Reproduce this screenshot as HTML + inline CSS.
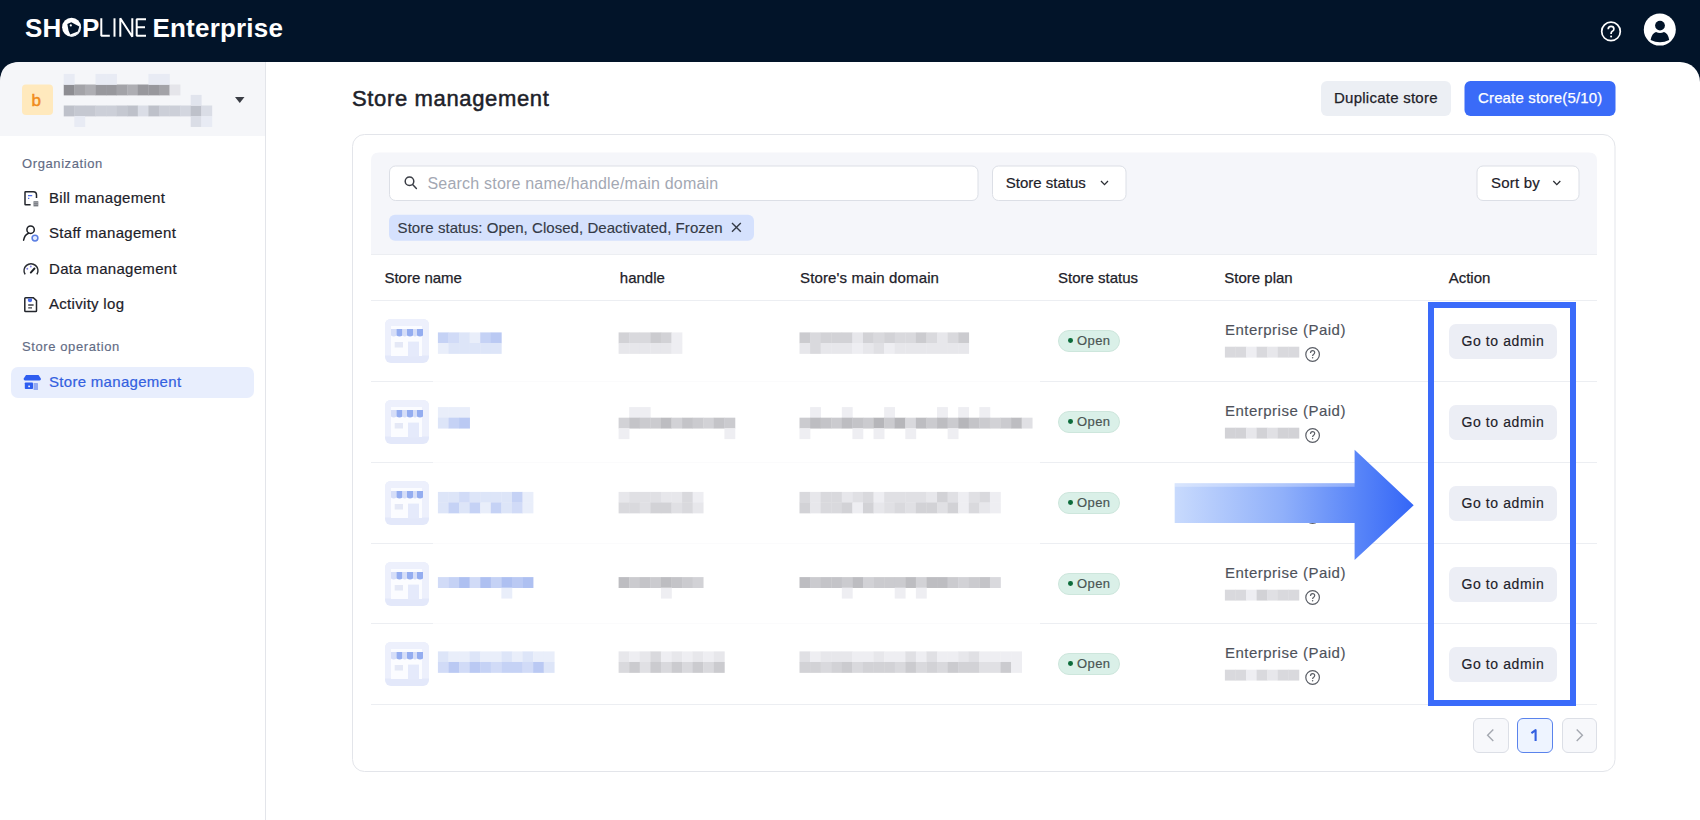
<!DOCTYPE html>
<html><head><meta charset="utf-8">
<style>
*{box-sizing:border-box;margin:0;padding:0}
html,body{width:1700px;height:820px;overflow:hidden;background:#021429;font-family:"Liberation Sans",sans-serif;color:#1d2129}
.a{position:absolute}
.t{position:absolute;white-space:nowrap;line-height:1}
svg{position:absolute;left:0;top:0;overflow:visible}
#page{position:absolute;left:0;top:62px;width:1700px;height:758px;background:#fff;border-radius:20px 20px 0 0;overflow:hidden}
#side{position:absolute;left:0;top:62px;width:266px;height:758px;border-right:1px solid #e3e5ea}
.nav{position:absolute;left:49px;font-size:15px;letter-spacing:.3px;-webkit-text-stroke:.2px currentColor;white-space:nowrap;line-height:1;color:#1d2129}
.lab{position:absolute;left:22px;font-size:13px;letter-spacing:.6px;white-space:nowrap;line-height:1;color:#626b84;-webkit-text-stroke:.15px currentColor}
.hd{position:absolute;top:269.5px;font-size:15px;-webkit-text-stroke:.25px currentColor;white-space:nowrap;line-height:1;color:#1d2129}
.badge{position:absolute;left:1057.6px;width:62.8px;height:22px;border-radius:11px;background:#daf0e8;border:1px solid #cde6dc;font-size:13px;letter-spacing:.4px;color:#4a5654;-webkit-text-stroke:.2px currentColor;line-height:20px;padding-left:18.5px}
.badge i{position:absolute;left:9.2px;top:7.7px;width:4.8px;height:4.8px;border-radius:50%;background:#0b6b3a}
.plan{left:1224.9px;font-size:15px;letter-spacing:.5px;color:#4e525b;-webkit-text-stroke:.15px currentColor}
.goto{position:absolute;left:1448.8px;width:108.2px;height:35px;border-radius:7px;background:#eceef5;font-size:14px;letter-spacing:.6px;color:#1d2129;line-height:35px;-webkit-text-stroke:.15px currentColor;text-align:center;white-space:nowrap}
.pg{position:absolute;top:718px;width:35.5px;height:35px;border:1.2px solid #dcdfe6;border-radius:6px;background:#f7f8fb}
</style></head>
<body>
<div id="page"></div>
<div id="side"></div>
<svg width="1700" height="820">
<!-- sidebar switcher -->
<path d="M20 62 H265 V136 H0 V82 Q0 62 20 62Z" fill="#f5f6f9"/>
<rect x="22" y="84.5" width="31" height="30.5" rx="4" fill="#ffe9bd"/>
<path d="M235 97 h9.5 l-4.75 6z" fill="#3a3d45"/>
<!-- active nav -->
<rect x="11" y="367" width="243" height="31" rx="7" fill="#e8eefd"/>
<!-- title buttons -->
<rect x="1321" y="81" width="130" height="35" rx="6" fill="#eceff4"/>
<rect x="1464.5" y="81" width="151" height="35" rx="6" fill="#3a6bf8"/>
<!-- card -->
<rect x="352.5" y="134.5" width="1262.5" height="637" rx="12" fill="#fff" stroke="#e3e5ea" stroke-width="1"/>
<path d="M379 152.5 H1589 Q1597 152.5 1597 160.5 V254.5 H371 V160.5 Q371 152.5 379 152.5Z" fill="#f5f6fa"/>
<rect x="371" y="254" width="1226" height="1" fill="#eceef2"/>
<rect x="389.5" y="166" width="588.5" height="34.5" rx="6" fill="#fff" stroke="#dcdfe6"/>
<rect x="992.5" y="166" width="133.5" height="34.5" rx="6" fill="#fff" stroke="#dcdfe6"/>
<rect x="1477" y="166" width="102" height="34.5" rx="6" fill="#fff" stroke="#dcdfe6"/>
<rect x="389" y="214.7" width="365" height="26" rx="6" fill="#d5e1fd"/>
<!-- table lines -->
<rect x="371" y="704" width="1226" height="1" fill="#eceef2"/><rect x="371" y="300" width="1226" height="1" fill="#eceef2"/><rect x="371" y="381" width="62" height="1" fill="#eceef2"/><rect x="433" y="381" width="607" height="1" fill="#fbfbfc"/><rect x="1040" y="381" width="557" height="1" fill="#eceef2"/><rect x="371" y="462" width="62" height="1" fill="#eceef2"/><rect x="433" y="462" width="607" height="1" fill="#fbfbfc"/><rect x="1040" y="462" width="557" height="1" fill="#eceef2"/><rect x="371" y="543" width="62" height="1" fill="#eceef2"/><rect x="433" y="543" width="607" height="1" fill="#fbfbfc"/><rect x="1040" y="543" width="557" height="1" fill="#eceef2"/><rect x="371" y="623" width="62" height="1" fill="#eceef2"/><rect x="433" y="623" width="607" height="1" fill="#fbfbfc"/><rect x="1040" y="623" width="557" height="1" fill="#eceef2"/>
<rect x="437.90" y="332.40" width="10.88" height="10.88" fill="rgb(197,210,245)"/><rect x="448.48" y="332.40" width="10.88" height="10.88" fill="rgb(209,219,247)"/><rect x="459.06" y="332.40" width="10.88" height="10.88" fill="rgb(221,229,248)"/><rect x="469.64" y="332.40" width="10.88" height="10.88" fill="rgb(233,238,250)"/><rect x="480.22" y="332.40" width="10.88" height="10.88" fill="rgb(197,210,245)"/><rect x="490.80" y="332.40" width="10.88" height="10.88" fill="rgb(186,201,243)"/><rect x="437.90" y="342.98" width="10.88" height="10.88" fill="rgb(233,238,250)"/><rect x="448.48" y="342.98" width="10.88" height="10.88" fill="rgb(221,229,248)"/><rect x="459.06" y="342.98" width="10.88" height="10.88" fill="rgb(221,229,248)"/><rect x="469.64" y="342.98" width="10.88" height="10.88" fill="rgb(221,229,248)"/><rect x="480.22" y="342.98" width="10.88" height="10.88" fill="rgb(221,229,248)"/><rect x="490.80" y="342.98" width="10.88" height="10.88" fill="rgb(221,229,248)"/><rect x="618.60" y="332.40" width="10.88" height="10.88" fill="rgb(210,210,214)"/><rect x="629.18" y="332.40" width="10.88" height="10.88" fill="rgb(217,217,221)"/><rect x="639.76" y="332.40" width="10.88" height="10.88" fill="rgb(217,217,221)"/><rect x="650.34" y="332.40" width="10.88" height="10.88" fill="rgb(203,203,207)"/><rect x="660.92" y="332.40" width="10.88" height="10.88" fill="rgb(210,210,214)"/><rect x="671.50" y="332.40" width="10.88" height="10.88" fill="rgb(238,238,242)"/><rect x="618.60" y="342.98" width="10.88" height="10.88" fill="rgb(231,231,235)"/><rect x="629.18" y="342.98" width="10.88" height="10.88" fill="rgb(231,231,235)"/><rect x="639.76" y="342.98" width="10.88" height="10.88" fill="rgb(231,231,235)"/><rect x="650.34" y="342.98" width="10.88" height="10.88" fill="rgb(231,231,235)"/><rect x="660.92" y="342.98" width="10.88" height="10.88" fill="rgb(231,231,235)"/><rect x="671.50" y="342.98" width="10.88" height="10.88" fill="rgb(238,238,242)"/><rect x="799.50" y="332.40" width="10.88" height="10.88" fill="rgb(203,203,207)"/><rect x="810.08" y="332.40" width="10.88" height="10.88" fill="rgb(217,217,221)"/><rect x="820.66" y="332.40" width="10.88" height="10.88" fill="rgb(210,210,214)"/><rect x="831.24" y="332.40" width="10.88" height="10.88" fill="rgb(210,210,214)"/><rect x="841.82" y="332.40" width="10.88" height="10.88" fill="rgb(210,210,214)"/><rect x="852.40" y="332.40" width="10.88" height="10.88" fill="rgb(231,231,235)"/><rect x="862.98" y="332.40" width="10.88" height="10.88" fill="rgb(210,210,214)"/><rect x="873.56" y="332.40" width="10.88" height="10.88" fill="rgb(217,217,221)"/><rect x="884.14" y="332.40" width="10.88" height="10.88" fill="rgb(210,210,214)"/><rect x="894.72" y="332.40" width="10.88" height="10.88" fill="rgb(217,217,221)"/><rect x="905.30" y="332.40" width="10.88" height="10.88" fill="rgb(217,217,221)"/><rect x="915.88" y="332.40" width="10.88" height="10.88" fill="rgb(203,203,207)"/><rect x="926.46" y="332.40" width="10.88" height="10.88" fill="rgb(217,217,221)"/><rect x="937.04" y="332.40" width="10.88" height="10.88" fill="rgb(231,231,235)"/><rect x="947.62" y="332.40" width="10.88" height="10.88" fill="rgb(217,217,221)"/><rect x="958.20" y="332.40" width="10.88" height="10.88" fill="rgb(203,203,207)"/><rect x="799.50" y="342.98" width="10.88" height="10.88" fill="rgb(231,231,235)"/><rect x="810.08" y="342.98" width="10.88" height="10.88" fill="rgb(217,217,221)"/><rect x="820.66" y="342.98" width="10.88" height="10.88" fill="rgb(231,231,235)"/><rect x="831.24" y="342.98" width="10.88" height="10.88" fill="rgb(231,231,235)"/><rect x="841.82" y="342.98" width="10.88" height="10.88" fill="rgb(231,231,235)"/><rect x="852.40" y="342.98" width="10.88" height="10.88" fill="rgb(238,238,242)"/><rect x="862.98" y="342.98" width="10.88" height="10.88" fill="rgb(231,231,235)"/><rect x="873.56" y="342.98" width="10.88" height="10.88" fill="rgb(224,224,228)"/><rect x="884.14" y="342.98" width="10.88" height="10.88" fill="rgb(238,238,242)"/><rect x="894.72" y="342.98" width="10.88" height="10.88" fill="rgb(231,231,235)"/><rect x="905.30" y="342.98" width="10.88" height="10.88" fill="rgb(231,231,235)"/><rect x="915.88" y="342.98" width="10.88" height="10.88" fill="rgb(231,231,235)"/><rect x="926.46" y="342.98" width="10.88" height="10.88" fill="rgb(231,231,235)"/><rect x="937.04" y="342.98" width="10.88" height="10.88" fill="rgb(231,231,235)"/><rect x="947.62" y="342.98" width="10.88" height="10.88" fill="rgb(231,231,235)"/><rect x="958.20" y="342.98" width="10.88" height="10.88" fill="rgb(231,231,235)"/><rect x="437.90" y="407.10" width="10.88" height="10.88" fill="rgb(233,238,250)"/><rect x="448.48" y="407.10" width="10.88" height="10.88" fill="rgb(233,238,250)"/><rect x="459.06" y="407.10" width="10.88" height="10.88" fill="rgb(233,238,250)"/><rect x="437.90" y="417.68" width="10.88" height="10.88" fill="rgb(221,229,248)"/><rect x="448.48" y="417.68" width="10.88" height="10.88" fill="rgb(197,210,245)"/><rect x="459.06" y="417.68" width="10.88" height="10.88" fill="rgb(186,201,243)"/><rect x="629.18" y="407.10" width="10.88" height="10.88" fill="rgb(238,238,242)"/><rect x="639.76" y="407.10" width="10.88" height="10.88" fill="rgb(238,238,242)"/><rect x="618.60" y="417.68" width="10.88" height="10.88" fill="rgb(210,210,214)"/><rect x="629.18" y="417.68" width="10.88" height="10.88" fill="rgb(196,196,200)"/><rect x="639.76" y="417.68" width="10.88" height="10.88" fill="rgb(203,203,207)"/><rect x="650.34" y="417.68" width="10.88" height="10.88" fill="rgb(203,203,207)"/><rect x="660.92" y="417.68" width="10.88" height="10.88" fill="rgb(189,189,193)"/><rect x="671.50" y="417.68" width="10.88" height="10.88" fill="rgb(210,210,214)"/><rect x="682.08" y="417.68" width="10.88" height="10.88" fill="rgb(196,196,200)"/><rect x="692.66" y="417.68" width="10.88" height="10.88" fill="rgb(203,203,207)"/><rect x="703.24" y="417.68" width="10.88" height="10.88" fill="rgb(210,210,214)"/><rect x="713.82" y="417.68" width="10.88" height="10.88" fill="rgb(196,196,200)"/><rect x="724.40" y="417.68" width="10.88" height="10.88" fill="rgb(203,203,207)"/><rect x="618.60" y="428.26" width="10.88" height="10.88" fill="rgb(238,238,242)"/><rect x="724.40" y="428.26" width="10.88" height="10.88" fill="rgb(238,238,242)"/><rect x="810.08" y="407.10" width="10.88" height="10.88" fill="rgb(238,238,242)"/><rect x="841.82" y="407.10" width="10.88" height="10.88" fill="rgb(238,238,242)"/><rect x="884.14" y="407.10" width="10.88" height="10.88" fill="rgb(238,238,242)"/><rect x="937.04" y="407.10" width="10.88" height="10.88" fill="rgb(238,238,242)"/><rect x="958.20" y="407.10" width="10.88" height="10.88" fill="rgb(238,238,242)"/><rect x="979.36" y="407.10" width="10.88" height="10.88" fill="rgb(238,238,242)"/><rect x="799.50" y="417.68" width="10.88" height="10.88" fill="rgb(203,203,207)"/><rect x="810.08" y="417.68" width="10.88" height="10.88" fill="rgb(189,189,193)"/><rect x="820.66" y="417.68" width="10.88" height="10.88" fill="rgb(196,196,200)"/><rect x="831.24" y="417.68" width="10.88" height="10.88" fill="rgb(203,203,207)"/><rect x="841.82" y="417.68" width="10.88" height="10.88" fill="rgb(189,189,193)"/><rect x="852.40" y="417.68" width="10.88" height="10.88" fill="rgb(196,196,200)"/><rect x="862.98" y="417.68" width="10.88" height="10.88" fill="rgb(203,203,207)"/><rect x="873.56" y="417.68" width="10.88" height="10.88" fill="rgb(182,182,186)"/><rect x="884.14" y="417.68" width="10.88" height="10.88" fill="rgb(203,203,207)"/><rect x="894.72" y="417.68" width="10.88" height="10.88" fill="rgb(182,182,186)"/><rect x="905.30" y="417.68" width="10.88" height="10.88" fill="rgb(217,217,221)"/><rect x="915.88" y="417.68" width="10.88" height="10.88" fill="rgb(189,189,193)"/><rect x="926.46" y="417.68" width="10.88" height="10.88" fill="rgb(203,203,207)"/><rect x="937.04" y="417.68" width="10.88" height="10.88" fill="rgb(189,189,193)"/><rect x="947.62" y="417.68" width="10.88" height="10.88" fill="rgb(203,203,207)"/><rect x="958.20" y="417.68" width="10.88" height="10.88" fill="rgb(182,182,186)"/><rect x="968.78" y="417.68" width="10.88" height="10.88" fill="rgb(196,196,200)"/><rect x="979.36" y="417.68" width="10.88" height="10.88" fill="rgb(203,203,207)"/><rect x="989.94" y="417.68" width="10.88" height="10.88" fill="rgb(210,210,214)"/><rect x="1000.52" y="417.68" width="10.88" height="10.88" fill="rgb(203,203,207)"/><rect x="1011.10" y="417.68" width="10.88" height="10.88" fill="rgb(189,189,193)"/><rect x="1021.68" y="417.68" width="10.88" height="10.88" fill="rgb(224,224,228)"/><rect x="799.50" y="428.26" width="10.88" height="10.88" fill="rgb(238,238,242)"/><rect x="852.40" y="428.26" width="10.88" height="10.88" fill="rgb(238,238,242)"/><rect x="873.56" y="428.26" width="10.88" height="10.88" fill="rgb(238,238,242)"/><rect x="905.30" y="428.26" width="10.88" height="10.88" fill="rgb(238,238,242)"/><rect x="947.62" y="428.26" width="10.88" height="10.88" fill="rgb(238,238,242)"/><rect x="437.90" y="491.90" width="10.88" height="10.88" fill="rgb(221,229,248)"/><rect x="448.48" y="491.90" width="10.88" height="10.88" fill="rgb(221,229,248)"/><rect x="459.06" y="491.90" width="10.88" height="10.88" fill="rgb(209,219,247)"/><rect x="469.64" y="491.90" width="10.88" height="10.88" fill="rgb(221,229,248)"/><rect x="480.22" y="491.90" width="10.88" height="10.88" fill="rgb(221,229,248)"/><rect x="490.80" y="491.90" width="10.88" height="10.88" fill="rgb(221,229,248)"/><rect x="501.38" y="491.90" width="10.88" height="10.88" fill="rgb(221,229,248)"/><rect x="511.96" y="491.90" width="10.88" height="10.88" fill="rgb(197,210,245)"/><rect x="522.54" y="491.90" width="10.88" height="10.88" fill="rgb(233,238,250)"/><rect x="437.90" y="502.48" width="10.88" height="10.88" fill="rgb(221,229,248)"/><rect x="448.48" y="502.48" width="10.88" height="10.88" fill="rgb(197,210,245)"/><rect x="459.06" y="502.48" width="10.88" height="10.88" fill="rgb(221,229,248)"/><rect x="469.64" y="502.48" width="10.88" height="10.88" fill="rgb(197,210,245)"/><rect x="480.22" y="502.48" width="10.88" height="10.88" fill="rgb(233,238,250)"/><rect x="490.80" y="502.48" width="10.88" height="10.88" fill="rgb(197,210,245)"/><rect x="501.38" y="502.48" width="10.88" height="10.88" fill="rgb(221,229,248)"/><rect x="511.96" y="502.48" width="10.88" height="10.88" fill="rgb(209,219,247)"/><rect x="522.54" y="502.48" width="10.88" height="10.88" fill="rgb(233,238,250)"/><rect x="618.60" y="491.90" width="10.88" height="10.88" fill="rgb(231,231,235)"/><rect x="629.18" y="491.90" width="10.88" height="10.88" fill="rgb(224,224,228)"/><rect x="639.76" y="491.90" width="10.88" height="10.88" fill="rgb(224,224,228)"/><rect x="650.34" y="491.90" width="10.88" height="10.88" fill="rgb(224,224,228)"/><rect x="660.92" y="491.90" width="10.88" height="10.88" fill="rgb(231,231,235)"/><rect x="671.50" y="491.90" width="10.88" height="10.88" fill="rgb(231,231,235)"/><rect x="682.08" y="491.90" width="10.88" height="10.88" fill="rgb(217,217,221)"/><rect x="692.66" y="491.90" width="10.88" height="10.88" fill="rgb(238,238,242)"/><rect x="618.60" y="502.48" width="10.88" height="10.88" fill="rgb(217,217,221)"/><rect x="629.18" y="502.48" width="10.88" height="10.88" fill="rgb(217,217,221)"/><rect x="639.76" y="502.48" width="10.88" height="10.88" fill="rgb(224,224,228)"/><rect x="650.34" y="502.48" width="10.88" height="10.88" fill="rgb(210,210,214)"/><rect x="660.92" y="502.48" width="10.88" height="10.88" fill="rgb(210,210,214)"/><rect x="671.50" y="502.48" width="10.88" height="10.88" fill="rgb(224,224,228)"/><rect x="682.08" y="502.48" width="10.88" height="10.88" fill="rgb(217,217,221)"/><rect x="692.66" y="502.48" width="10.88" height="10.88" fill="rgb(231,231,235)"/><rect x="799.50" y="491.90" width="10.88" height="10.88" fill="rgb(217,217,221)"/><rect x="810.08" y="491.90" width="10.88" height="10.88" fill="rgb(231,231,235)"/><rect x="820.66" y="491.90" width="10.88" height="10.88" fill="rgb(217,217,221)"/><rect x="831.24" y="491.90" width="10.88" height="10.88" fill="rgb(217,217,221)"/><rect x="841.82" y="491.90" width="10.88" height="10.88" fill="rgb(231,231,235)"/><rect x="852.40" y="491.90" width="10.88" height="10.88" fill="rgb(224,224,228)"/><rect x="862.98" y="491.90" width="10.88" height="10.88" fill="rgb(217,217,221)"/><rect x="873.56" y="491.90" width="10.88" height="10.88" fill="rgb(238,238,242)"/><rect x="884.14" y="491.90" width="10.88" height="10.88" fill="rgb(224,224,228)"/><rect x="894.72" y="491.90" width="10.88" height="10.88" fill="rgb(224,224,228)"/><rect x="905.30" y="491.90" width="10.88" height="10.88" fill="rgb(224,224,228)"/><rect x="915.88" y="491.90" width="10.88" height="10.88" fill="rgb(224,224,228)"/><rect x="926.46" y="491.90" width="10.88" height="10.88" fill="rgb(231,231,235)"/><rect x="937.04" y="491.90" width="10.88" height="10.88" fill="rgb(210,210,214)"/><rect x="947.62" y="491.90" width="10.88" height="10.88" fill="rgb(224,224,228)"/><rect x="958.20" y="491.90" width="10.88" height="10.88" fill="rgb(238,238,242)"/><rect x="968.78" y="491.90" width="10.88" height="10.88" fill="rgb(224,224,228)"/><rect x="979.36" y="491.90" width="10.88" height="10.88" fill="rgb(217,217,221)"/><rect x="989.94" y="491.90" width="10.88" height="10.88" fill="rgb(238,238,242)"/><rect x="799.50" y="502.48" width="10.88" height="10.88" fill="rgb(210,210,214)"/><rect x="810.08" y="502.48" width="10.88" height="10.88" fill="rgb(231,231,235)"/><rect x="820.66" y="502.48" width="10.88" height="10.88" fill="rgb(217,217,221)"/><rect x="831.24" y="502.48" width="10.88" height="10.88" fill="rgb(217,217,221)"/><rect x="841.82" y="502.48" width="10.88" height="10.88" fill="rgb(210,210,214)"/><rect x="852.40" y="502.48" width="10.88" height="10.88" fill="rgb(238,238,242)"/><rect x="862.98" y="502.48" width="10.88" height="10.88" fill="rgb(210,210,214)"/><rect x="873.56" y="502.48" width="10.88" height="10.88" fill="rgb(231,231,235)"/><rect x="884.14" y="502.48" width="10.88" height="10.88" fill="rgb(224,224,228)"/><rect x="894.72" y="502.48" width="10.88" height="10.88" fill="rgb(217,217,221)"/><rect x="905.30" y="502.48" width="10.88" height="10.88" fill="rgb(224,224,228)"/><rect x="915.88" y="502.48" width="10.88" height="10.88" fill="rgb(210,210,214)"/><rect x="926.46" y="502.48" width="10.88" height="10.88" fill="rgb(210,210,214)"/><rect x="937.04" y="502.48" width="10.88" height="10.88" fill="rgb(224,224,228)"/><rect x="947.62" y="502.48" width="10.88" height="10.88" fill="rgb(210,210,214)"/><rect x="958.20" y="502.48" width="10.88" height="10.88" fill="rgb(238,238,242)"/><rect x="968.78" y="502.48" width="10.88" height="10.88" fill="rgb(217,217,221)"/><rect x="979.36" y="502.48" width="10.88" height="10.88" fill="rgb(231,231,235)"/><rect x="989.94" y="502.48" width="10.88" height="10.88" fill="rgb(238,238,242)"/><rect x="437.90" y="577.10" width="10.88" height="10.88" fill="rgb(209,219,247)"/><rect x="448.48" y="577.10" width="10.88" height="10.88" fill="rgb(197,210,245)"/><rect x="459.06" y="577.10" width="10.88" height="10.88" fill="rgb(174,192,241)"/><rect x="469.64" y="577.10" width="10.88" height="10.88" fill="rgb(209,219,247)"/><rect x="480.22" y="577.10" width="10.88" height="10.88" fill="rgb(174,192,241)"/><rect x="490.80" y="577.10" width="10.88" height="10.88" fill="rgb(197,210,245)"/><rect x="501.38" y="577.10" width="10.88" height="10.88" fill="rgb(174,192,241)"/><rect x="511.96" y="577.10" width="10.88" height="10.88" fill="rgb(186,201,243)"/><rect x="522.54" y="577.10" width="10.88" height="10.88" fill="rgb(174,192,241)"/><rect x="501.38" y="587.68" width="10.88" height="10.88" fill="rgb(233,238,250)"/><rect x="618.60" y="577.10" width="10.88" height="10.88" fill="rgb(189,189,193)"/><rect x="629.18" y="577.10" width="10.88" height="10.88" fill="rgb(203,203,207)"/><rect x="639.76" y="577.10" width="10.88" height="10.88" fill="rgb(196,196,200)"/><rect x="650.34" y="577.10" width="10.88" height="10.88" fill="rgb(203,203,207)"/><rect x="660.92" y="577.10" width="10.88" height="10.88" fill="rgb(189,189,193)"/><rect x="671.50" y="577.10" width="10.88" height="10.88" fill="rgb(196,196,200)"/><rect x="682.08" y="577.10" width="10.88" height="10.88" fill="rgb(203,203,207)"/><rect x="692.66" y="577.10" width="10.88" height="10.88" fill="rgb(210,210,214)"/><rect x="660.92" y="587.68" width="10.88" height="10.88" fill="rgb(238,238,242)"/><rect x="799.50" y="577.10" width="10.88" height="10.88" fill="rgb(189,189,193)"/><rect x="810.08" y="577.10" width="10.88" height="10.88" fill="rgb(203,203,207)"/><rect x="820.66" y="577.10" width="10.88" height="10.88" fill="rgb(196,196,200)"/><rect x="831.24" y="577.10" width="10.88" height="10.88" fill="rgb(196,196,200)"/><rect x="841.82" y="577.10" width="10.88" height="10.88" fill="rgb(203,203,207)"/><rect x="852.40" y="577.10" width="10.88" height="10.88" fill="rgb(189,189,193)"/><rect x="862.98" y="577.10" width="10.88" height="10.88" fill="rgb(210,210,214)"/><rect x="873.56" y="577.10" width="10.88" height="10.88" fill="rgb(203,203,207)"/><rect x="884.14" y="577.10" width="10.88" height="10.88" fill="rgb(203,203,207)"/><rect x="894.72" y="577.10" width="10.88" height="10.88" fill="rgb(203,203,207)"/><rect x="905.30" y="577.10" width="10.88" height="10.88" fill="rgb(189,189,193)"/><rect x="915.88" y="577.10" width="10.88" height="10.88" fill="rgb(210,210,214)"/><rect x="926.46" y="577.10" width="10.88" height="10.88" fill="rgb(189,189,193)"/><rect x="937.04" y="577.10" width="10.88" height="10.88" fill="rgb(189,189,193)"/><rect x="947.62" y="577.10" width="10.88" height="10.88" fill="rgb(203,203,207)"/><rect x="958.20" y="577.10" width="10.88" height="10.88" fill="rgb(210,210,214)"/><rect x="968.78" y="577.10" width="10.88" height="10.88" fill="rgb(203,203,207)"/><rect x="979.36" y="577.10" width="10.88" height="10.88" fill="rgb(196,196,200)"/><rect x="989.94" y="577.10" width="10.88" height="10.88" fill="rgb(217,217,221)"/><rect x="841.82" y="587.68" width="10.88" height="10.88" fill="rgb(238,238,242)"/><rect x="894.72" y="587.68" width="10.88" height="10.88" fill="rgb(238,238,242)"/><rect x="915.88" y="587.68" width="10.88" height="10.88" fill="rgb(238,238,242)"/><rect x="437.90" y="651.40" width="10.88" height="10.88" fill="rgb(221,229,248)"/><rect x="448.48" y="651.40" width="10.88" height="10.88" fill="rgb(233,238,250)"/><rect x="459.06" y="651.40" width="10.88" height="10.88" fill="rgb(233,238,250)"/><rect x="469.64" y="651.40" width="10.88" height="10.88" fill="rgb(221,229,248)"/><rect x="480.22" y="651.40" width="10.88" height="10.88" fill="rgb(233,238,250)"/><rect x="490.80" y="651.40" width="10.88" height="10.88" fill="rgb(233,238,250)"/><rect x="501.38" y="651.40" width="10.88" height="10.88" fill="rgb(221,229,248)"/><rect x="511.96" y="651.40" width="10.88" height="10.88" fill="rgb(233,238,250)"/><rect x="522.54" y="651.40" width="10.88" height="10.88" fill="rgb(221,229,248)"/><rect x="533.12" y="651.40" width="10.88" height="10.88" fill="rgb(233,238,250)"/><rect x="543.70" y="651.40" width="10.88" height="10.88" fill="rgb(233,238,250)"/><rect x="437.90" y="661.98" width="10.88" height="10.88" fill="rgb(209,219,247)"/><rect x="448.48" y="661.98" width="10.88" height="10.88" fill="rgb(186,201,243)"/><rect x="459.06" y="661.98" width="10.88" height="10.88" fill="rgb(209,219,247)"/><rect x="469.64" y="661.98" width="10.88" height="10.88" fill="rgb(186,201,243)"/><rect x="480.22" y="661.98" width="10.88" height="10.88" fill="rgb(197,210,245)"/><rect x="490.80" y="661.98" width="10.88" height="10.88" fill="rgb(209,219,247)"/><rect x="501.38" y="661.98" width="10.88" height="10.88" fill="rgb(197,210,245)"/><rect x="511.96" y="661.98" width="10.88" height="10.88" fill="rgb(197,210,245)"/><rect x="522.54" y="661.98" width="10.88" height="10.88" fill="rgb(209,219,247)"/><rect x="533.12" y="661.98" width="10.88" height="10.88" fill="rgb(186,201,243)"/><rect x="543.70" y="661.98" width="10.88" height="10.88" fill="rgb(221,229,248)"/><rect x="618.60" y="651.40" width="10.88" height="10.88" fill="rgb(231,231,235)"/><rect x="629.18" y="651.40" width="10.88" height="10.88" fill="rgb(238,238,242)"/><rect x="639.76" y="651.40" width="10.88" height="10.88" fill="rgb(231,231,235)"/><rect x="650.34" y="651.40" width="10.88" height="10.88" fill="rgb(217,217,221)"/><rect x="660.92" y="651.40" width="10.88" height="10.88" fill="rgb(238,238,242)"/><rect x="671.50" y="651.40" width="10.88" height="10.88" fill="rgb(231,231,235)"/><rect x="682.08" y="651.40" width="10.88" height="10.88" fill="rgb(238,238,242)"/><rect x="692.66" y="651.40" width="10.88" height="10.88" fill="rgb(231,231,235)"/><rect x="703.24" y="651.40" width="10.88" height="10.88" fill="rgb(238,238,242)"/><rect x="713.82" y="651.40" width="10.88" height="10.88" fill="rgb(231,231,235)"/><rect x="618.60" y="661.98" width="10.88" height="10.88" fill="rgb(217,217,221)"/><rect x="629.18" y="661.98" width="10.88" height="10.88" fill="rgb(203,203,207)"/><rect x="639.76" y="661.98" width="10.88" height="10.88" fill="rgb(224,224,228)"/><rect x="650.34" y="661.98" width="10.88" height="10.88" fill="rgb(203,203,207)"/><rect x="660.92" y="661.98" width="10.88" height="10.88" fill="rgb(217,217,221)"/><rect x="671.50" y="661.98" width="10.88" height="10.88" fill="rgb(203,203,207)"/><rect x="682.08" y="661.98" width="10.88" height="10.88" fill="rgb(217,217,221)"/><rect x="692.66" y="661.98" width="10.88" height="10.88" fill="rgb(203,203,207)"/><rect x="703.24" y="661.98" width="10.88" height="10.88" fill="rgb(217,217,221)"/><rect x="713.82" y="661.98" width="10.88" height="10.88" fill="rgb(203,203,207)"/><rect x="799.50" y="651.40" width="10.88" height="10.88" fill="rgb(224,224,228)"/><rect x="810.08" y="651.40" width="10.88" height="10.88" fill="rgb(238,238,242)"/><rect x="820.66" y="651.40" width="10.88" height="10.88" fill="rgb(231,231,235)"/><rect x="831.24" y="651.40" width="10.88" height="10.88" fill="rgb(231,231,235)"/><rect x="841.82" y="651.40" width="10.88" height="10.88" fill="rgb(231,231,235)"/><rect x="852.40" y="651.40" width="10.88" height="10.88" fill="rgb(238,238,242)"/><rect x="862.98" y="651.40" width="10.88" height="10.88" fill="rgb(238,238,242)"/><rect x="873.56" y="651.40" width="10.88" height="10.88" fill="rgb(231,231,235)"/><rect x="884.14" y="651.40" width="10.88" height="10.88" fill="rgb(238,238,242)"/><rect x="894.72" y="651.40" width="10.88" height="10.88" fill="rgb(238,238,242)"/><rect x="905.30" y="651.40" width="10.88" height="10.88" fill="rgb(224,224,228)"/><rect x="915.88" y="651.40" width="10.88" height="10.88" fill="rgb(238,238,242)"/><rect x="926.46" y="651.40" width="10.88" height="10.88" fill="rgb(224,224,228)"/><rect x="937.04" y="651.40" width="10.88" height="10.88" fill="rgb(238,238,242)"/><rect x="947.62" y="651.40" width="10.88" height="10.88" fill="rgb(238,238,242)"/><rect x="958.20" y="651.40" width="10.88" height="10.88" fill="rgb(231,231,235)"/><rect x="968.78" y="651.40" width="10.88" height="10.88" fill="rgb(224,224,228)"/><rect x="979.36" y="651.40" width="10.88" height="10.88" fill="rgb(238,238,242)"/><rect x="989.94" y="651.40" width="10.88" height="10.88" fill="rgb(238,238,242)"/><rect x="1000.52" y="651.40" width="10.88" height="10.88" fill="rgb(238,238,242)"/><rect x="1011.10" y="651.40" width="10.88" height="10.88" fill="rgb(238,238,242)"/><rect x="799.50" y="661.98" width="10.88" height="10.88" fill="rgb(210,210,214)"/><rect x="810.08" y="661.98" width="10.88" height="10.88" fill="rgb(210,210,214)"/><rect x="820.66" y="661.98" width="10.88" height="10.88" fill="rgb(217,217,221)"/><rect x="831.24" y="661.98" width="10.88" height="10.88" fill="rgb(210,210,214)"/><rect x="841.82" y="661.98" width="10.88" height="10.88" fill="rgb(203,203,207)"/><rect x="852.40" y="661.98" width="10.88" height="10.88" fill="rgb(217,217,221)"/><rect x="862.98" y="661.98" width="10.88" height="10.88" fill="rgb(210,210,214)"/><rect x="873.56" y="661.98" width="10.88" height="10.88" fill="rgb(210,210,214)"/><rect x="884.14" y="661.98" width="10.88" height="10.88" fill="rgb(210,210,214)"/><rect x="894.72" y="661.98" width="10.88" height="10.88" fill="rgb(217,217,221)"/><rect x="905.30" y="661.98" width="10.88" height="10.88" fill="rgb(203,203,207)"/><rect x="915.88" y="661.98" width="10.88" height="10.88" fill="rgb(217,217,221)"/><rect x="926.46" y="661.98" width="10.88" height="10.88" fill="rgb(210,210,214)"/><rect x="937.04" y="661.98" width="10.88" height="10.88" fill="rgb(217,217,221)"/><rect x="947.62" y="661.98" width="10.88" height="10.88" fill="rgb(203,203,207)"/><rect x="958.20" y="661.98" width="10.88" height="10.88" fill="rgb(210,210,214)"/><rect x="968.78" y="661.98" width="10.88" height="10.88" fill="rgb(210,210,214)"/><rect x="979.36" y="661.98" width="10.88" height="10.88" fill="rgb(224,224,228)"/><rect x="989.94" y="661.98" width="10.88" height="10.88" fill="rgb(224,224,228)"/><rect x="1000.52" y="661.98" width="10.88" height="10.88" fill="rgb(203,203,207)"/><rect x="1011.10" y="661.98" width="10.88" height="10.88" fill="rgb(238,238,242)"/><rect x="1224.90" y="346.70" width="10.88" height="10.88" fill="rgb(217,217,221)"/><rect x="1235.48" y="346.70" width="10.88" height="10.88" fill="rgb(217,217,221)"/><rect x="1246.06" y="346.70" width="10.88" height="10.88" fill="rgb(238,238,242)"/><rect x="1256.64" y="346.70" width="10.88" height="10.88" fill="rgb(217,217,221)"/><rect x="1267.22" y="346.70" width="10.88" height="10.88" fill="rgb(231,231,235)"/><rect x="1277.80" y="346.70" width="10.88" height="10.88" fill="rgb(217,217,221)"/><rect x="1288.38" y="346.70" width="10.88" height="10.88" fill="rgb(217,217,221)"/><rect x="1224.90" y="427.70" width="10.88" height="10.88" fill="rgb(210,210,214)"/><rect x="1235.48" y="427.70" width="10.88" height="10.88" fill="rgb(210,210,214)"/><rect x="1246.06" y="427.70" width="10.88" height="10.88" fill="rgb(231,231,235)"/><rect x="1256.64" y="427.70" width="10.88" height="10.88" fill="rgb(210,210,214)"/><rect x="1267.22" y="427.70" width="10.88" height="10.88" fill="rgb(224,224,228)"/><rect x="1277.80" y="427.70" width="10.88" height="10.88" fill="rgb(210,210,214)"/><rect x="1288.38" y="427.70" width="10.88" height="10.88" fill="rgb(210,210,214)"/><rect x="1224.90" y="508.70" width="10.88" height="10.88" fill="rgb(217,217,221)"/><rect x="1235.48" y="508.70" width="10.88" height="10.88" fill="rgb(217,217,221)"/><rect x="1246.06" y="508.70" width="10.88" height="10.88" fill="rgb(238,238,242)"/><rect x="1256.64" y="508.70" width="10.88" height="10.88" fill="rgb(217,217,221)"/><rect x="1267.22" y="508.70" width="10.88" height="10.88" fill="rgb(231,231,235)"/><rect x="1277.80" y="508.70" width="10.88" height="10.88" fill="rgb(217,217,221)"/><rect x="1288.38" y="508.70" width="10.88" height="10.88" fill="rgb(217,217,221)"/><rect x="1224.90" y="589.70" width="10.88" height="10.88" fill="rgb(217,217,221)"/><rect x="1235.48" y="589.70" width="10.88" height="10.88" fill="rgb(217,217,221)"/><rect x="1246.06" y="589.70" width="10.88" height="10.88" fill="rgb(238,238,242)"/><rect x="1256.64" y="589.70" width="10.88" height="10.88" fill="rgb(210,210,214)"/><rect x="1267.22" y="589.70" width="10.88" height="10.88" fill="rgb(224,224,228)"/><rect x="1277.80" y="589.70" width="10.88" height="10.88" fill="rgb(217,217,221)"/><rect x="1288.38" y="589.70" width="10.88" height="10.88" fill="rgb(217,217,221)"/><rect x="1224.90" y="669.70" width="10.88" height="10.88" fill="rgb(217,217,221)"/><rect x="1235.48" y="669.70" width="10.88" height="10.88" fill="rgb(217,217,221)"/><rect x="1246.06" y="669.70" width="10.88" height="10.88" fill="rgb(238,238,242)"/><rect x="1256.64" y="669.70" width="10.88" height="10.88" fill="rgb(217,217,221)"/><rect x="1267.22" y="669.70" width="10.88" height="10.88" fill="rgb(231,231,235)"/><rect x="1277.80" y="669.70" width="10.88" height="10.88" fill="rgb(217,217,221)"/><rect x="1288.38" y="669.70" width="10.88" height="10.88" fill="rgb(217,217,221)"/>
<g transform="translate(385,319)">
<rect x="0" y="0" width="44" height="44" rx="6" fill="#e3e8fa"/>
<path d="M0 6 Q0 0 6 0 H38 Q44 0 44 6 V36.5 H0Z" fill="#edf0fc"/>
<rect x="6" y="7" width="31" height="30" fill="#fbfcff"/>
<path d="M6 10 h5.5 v6.5 q-2.75 2 -5.5 0z" fill="#d6def8"/>
<path d="M11.5 10 h6 v6.5 q-3 2.2 -6 0z" fill="#94adf0"/>
<path d="M17.5 10 h4.5 v6.5 q-2.25 2 -4.5 0z" fill="#d6def8"/>
<path d="M22 10 h6 v6.5 q-3 2.2 -6 0z" fill="#94adf0"/>
<path d="M28 10 h4 v6.5 q-2 2 -4 0z" fill="#d6def8"/>
<path d="M32 10 h6 v6.5 q-3 2.2 -6 0z" fill="#94adf0"/>
<rect x="9.7" y="23" width="8.3" height="5.5" fill="#e4e8f6"/>
<rect x="23" y="22.6" width="11" height="15" fill="#e5eafb"/>
</g><g transform="translate(385,400)">
<rect x="0" y="0" width="44" height="44" rx="6" fill="#e3e8fa"/>
<path d="M0 6 Q0 0 6 0 H38 Q44 0 44 6 V36.5 H0Z" fill="#edf0fc"/>
<rect x="6" y="7" width="31" height="30" fill="#fbfcff"/>
<path d="M6 10 h5.5 v6.5 q-2.75 2 -5.5 0z" fill="#d6def8"/>
<path d="M11.5 10 h6 v6.5 q-3 2.2 -6 0z" fill="#94adf0"/>
<path d="M17.5 10 h4.5 v6.5 q-2.25 2 -4.5 0z" fill="#d6def8"/>
<path d="M22 10 h6 v6.5 q-3 2.2 -6 0z" fill="#94adf0"/>
<path d="M28 10 h4 v6.5 q-2 2 -4 0z" fill="#d6def8"/>
<path d="M32 10 h6 v6.5 q-3 2.2 -6 0z" fill="#94adf0"/>
<rect x="9.7" y="23" width="8.3" height="5.5" fill="#e4e8f6"/>
<rect x="23" y="22.6" width="11" height="15" fill="#e5eafb"/>
</g><g transform="translate(385,481)">
<rect x="0" y="0" width="44" height="44" rx="6" fill="#e3e8fa"/>
<path d="M0 6 Q0 0 6 0 H38 Q44 0 44 6 V36.5 H0Z" fill="#edf0fc"/>
<rect x="6" y="7" width="31" height="30" fill="#fbfcff"/>
<path d="M6 10 h5.5 v6.5 q-2.75 2 -5.5 0z" fill="#d6def8"/>
<path d="M11.5 10 h6 v6.5 q-3 2.2 -6 0z" fill="#94adf0"/>
<path d="M17.5 10 h4.5 v6.5 q-2.25 2 -4.5 0z" fill="#d6def8"/>
<path d="M22 10 h6 v6.5 q-3 2.2 -6 0z" fill="#94adf0"/>
<path d="M28 10 h4 v6.5 q-2 2 -4 0z" fill="#d6def8"/>
<path d="M32 10 h6 v6.5 q-3 2.2 -6 0z" fill="#94adf0"/>
<rect x="9.7" y="23" width="8.3" height="5.5" fill="#e4e8f6"/>
<rect x="23" y="22.6" width="11" height="15" fill="#e5eafb"/>
</g><g transform="translate(385,562)">
<rect x="0" y="0" width="44" height="44" rx="6" fill="#e3e8fa"/>
<path d="M0 6 Q0 0 6 0 H38 Q44 0 44 6 V36.5 H0Z" fill="#edf0fc"/>
<rect x="6" y="7" width="31" height="30" fill="#fbfcff"/>
<path d="M6 10 h5.5 v6.5 q-2.75 2 -5.5 0z" fill="#d6def8"/>
<path d="M11.5 10 h6 v6.5 q-3 2.2 -6 0z" fill="#94adf0"/>
<path d="M17.5 10 h4.5 v6.5 q-2.25 2 -4.5 0z" fill="#d6def8"/>
<path d="M22 10 h6 v6.5 q-3 2.2 -6 0z" fill="#94adf0"/>
<path d="M28 10 h4 v6.5 q-2 2 -4 0z" fill="#d6def8"/>
<path d="M32 10 h6 v6.5 q-3 2.2 -6 0z" fill="#94adf0"/>
<rect x="9.7" y="23" width="8.3" height="5.5" fill="#e4e8f6"/>
<rect x="23" y="22.6" width="11" height="15" fill="#e5eafb"/>
</g><g transform="translate(385,642)">
<rect x="0" y="0" width="44" height="44" rx="6" fill="#e3e8fa"/>
<path d="M0 6 Q0 0 6 0 H38 Q44 0 44 6 V36.5 H0Z" fill="#edf0fc"/>
<rect x="6" y="7" width="31" height="30" fill="#fbfcff"/>
<path d="M6 10 h5.5 v6.5 q-2.75 2 -5.5 0z" fill="#d6def8"/>
<path d="M11.5 10 h6 v6.5 q-3 2.2 -6 0z" fill="#94adf0"/>
<path d="M17.5 10 h4.5 v6.5 q-2.25 2 -4.5 0z" fill="#d6def8"/>
<path d="M22 10 h6 v6.5 q-3 2.2 -6 0z" fill="#94adf0"/>
<path d="M28 10 h4 v6.5 q-2 2 -4 0z" fill="#d6def8"/>
<path d="M32 10 h6 v6.5 q-3 2.2 -6 0z" fill="#94adf0"/>
<rect x="9.7" y="23" width="8.3" height="5.5" fill="#e4e8f6"/>
<rect x="23" y="22.6" width="11" height="15" fill="#e5eafb"/>
</g>
<circle cx="1312.6" cy="354.5" r="6.8" fill="none" stroke="#5a5e66" stroke-width="1.2"/><path d="M1310.5 352.9 q0 -2.3 2.1 -2.3 q2.1 0 2.1 2 q0 1.2 -1.2 1.8 q-0.9 0.5 -0.9 1.6" fill="none" stroke="#5a5e66" stroke-width="1.2"/><circle cx="1312.6" cy="357.7" r="0.75" fill="#5a5e66"/><circle cx="1312.6" cy="435.5" r="6.8" fill="none" stroke="#5a5e66" stroke-width="1.2"/><path d="M1310.5 433.9 q0 -2.3 2.1 -2.3 q2.1 0 2.1 2 q0 1.2 -1.2 1.8 q-0.9 0.5 -0.9 1.6" fill="none" stroke="#5a5e66" stroke-width="1.2"/><circle cx="1312.6" cy="438.7" r="0.75" fill="#5a5e66"/><circle cx="1312.6" cy="516.5" r="6.8" fill="none" stroke="#5a5e66" stroke-width="1.2"/><path d="M1310.5 514.9 q0 -2.3 2.1 -2.3 q2.1 0 2.1 2 q0 1.2 -1.2 1.8 q-0.9 0.5 -0.9 1.6" fill="none" stroke="#5a5e66" stroke-width="1.2"/><circle cx="1312.6" cy="519.7" r="0.75" fill="#5a5e66"/><circle cx="1312.6" cy="597.5" r="6.8" fill="none" stroke="#5a5e66" stroke-width="1.2"/><path d="M1310.5 595.9 q0 -2.3 2.1 -2.3 q2.1 0 2.1 2 q0 1.2 -1.2 1.8 q-0.9 0.5 -0.9 1.6" fill="none" stroke="#5a5e66" stroke-width="1.2"/><circle cx="1312.6" cy="600.7" r="0.75" fill="#5a5e66"/><circle cx="1312.6" cy="677.5" r="6.8" fill="none" stroke="#5a5e66" stroke-width="1.2"/><path d="M1310.5 675.9 q0 -2.3 2.1 -2.3 q2.1 0 2.1 2 q0 1.2 -1.2 1.8 q-0.9 0.5 -0.9 1.6" fill="none" stroke="#5a5e66" stroke-width="1.2"/><circle cx="1312.6" cy="680.7" r="0.75" fill="#5a5e66"/>

<!-- logo -->
<g fill="#fff">
<circle cx="71.6" cy="27.2" r="9.5"/>
<path d="M67.3 23.9 L71.3 22.2 L79.3 26.6 L77.8 31.4 L70.2 34.6 L68.5 30.4Z" fill="#021429"/>
<circle cx="70.8" cy="25.4" r="1.1"/>
<path d="M79.8 25.5 A9 9 0 0 1 70.5 36.2" fill="none" stroke="#dfe6ee" stroke-width="1"/>
</g>
<g stroke="#fff" stroke-width="2" fill="none" stroke-linejoin="miter" stroke-miterlimit="1">
<path d="M101.3 18.3 V35.7 H109.8"/>
<path d="M114.5 18.3 V36.7"/>
<path d="M120.3 36.7 V18.3 L132.3 36.7 V18.3"/>
<path d="M146 19.3 H136.7 V35.7 H146 M136.7 27.2 H145"/>
</g>
<!-- header icons -->
<circle cx="1611" cy="31.4" r="9.3" fill="none" stroke="#fff" stroke-width="1.7"/>
<path d="M1608.2 29.2 q0 -2.9 2.9 -2.9 q2.8 0 2.8 2.6 q0 1.6 -1.6 2.4 q-1.2 0.7 -1.2 2.1 v0.6" fill="none" stroke="#fff" stroke-width="1.7"/>
<circle cx="1611.1" cy="36.6" r="1" fill="#fff"/>
<circle cx="1659.8" cy="29.6" r="16" fill="#fff"/>
<circle cx="1660" cy="25.6" r="4.9" fill="#021429"/>
<path d="M1650.6 40 Q1652 33 1656 32 Q1660 34 1664 32 Q1668 33 1669.2 40 Q1660 44.5 1650.6 40Z" fill="#021429"/>
<!-- switcher pixel text -->
<rect x="63.75" y="84.50" width="10.88" height="10.88" fill="rgb(141,141,146)"/><rect x="74.33" y="84.50" width="10.88" height="10.88" fill="rgb(163,163,168)"/><rect x="84.91" y="84.50" width="10.88" height="10.88" fill="rgb(174,174,179)"/><rect x="95.49" y="84.50" width="10.88" height="10.88" fill="rgb(152,152,157)"/><rect x="106.07" y="84.50" width="10.88" height="10.88" fill="rgb(152,152,157)"/><rect x="116.65" y="84.50" width="10.88" height="10.88" fill="rgb(163,163,168)"/><rect x="127.23" y="84.50" width="10.88" height="10.88" fill="rgb(174,174,179)"/><rect x="137.81" y="84.50" width="10.88" height="10.88" fill="rgb(152,152,157)"/><rect x="148.39" y="84.50" width="10.88" height="10.88" fill="rgb(152,152,157)"/><rect x="158.97" y="84.50" width="10.88" height="10.88" fill="rgb(163,163,168)"/><rect x="169.55" y="84.50" width="10.88" height="10.88" fill="rgb(229,229,234)"/><rect x="63.75" y="105.50" width="10.88" height="10.88" fill="rgb(190,193,202)"/><rect x="74.33" y="105.50" width="10.88" height="10.88" fill="rgb(197,200,209)"/><rect x="84.91" y="105.50" width="10.88" height="10.88" fill="rgb(197,200,209)"/><rect x="95.49" y="105.50" width="10.88" height="10.88" fill="rgb(204,207,216)"/><rect x="106.07" y="105.50" width="10.88" height="10.88" fill="rgb(204,207,216)"/><rect x="116.65" y="105.50" width="10.88" height="10.88" fill="rgb(197,200,209)"/><rect x="127.23" y="105.50" width="10.88" height="10.88" fill="rgb(190,193,202)"/><rect x="137.81" y="105.50" width="10.88" height="10.88" fill="rgb(218,221,230)"/><rect x="148.39" y="105.50" width="10.88" height="10.88" fill="rgb(190,193,202)"/><rect x="158.97" y="105.50" width="10.88" height="10.88" fill="rgb(204,207,216)"/><rect x="169.55" y="105.50" width="10.88" height="10.88" fill="rgb(204,207,216)"/><rect x="180.13" y="105.50" width="10.88" height="10.88" fill="rgb(211,214,223)"/><rect x="190.71" y="105.50" width="10.88" height="10.88" fill="rgb(190,193,202)"/><rect x="201.29" y="105.50" width="10.88" height="10.88" fill="rgb(218,221,230)"/><rect x="74.33" y="116.08" width="10.88" height="10.88" fill="rgb(232,235,244)"/><rect x="190.71" y="116.08" width="10.88" height="10.88" fill="rgb(218,221,230)"/><rect x="201.29" y="116.08" width="10.88" height="10.88" fill="rgb(232,235,244)"/><rect x="63.75" y="73.92" width="10.88" height="10.88" fill="rgb(232,235,244)"/><rect x="95.49" y="73.92" width="10.88" height="10.88" fill="rgb(232,235,244)"/><rect x="106.07" y="73.92" width="10.88" height="10.88" fill="rgb(232,235,244)"/><rect x="148.39" y="73.92" width="10.88" height="10.88" fill="rgb(232,235,244)"/><rect x="158.97" y="73.92" width="10.88" height="10.88" fill="rgb(232,235,244)"/><rect x="190.71" y="94.92" width="10.88" height="10.88" fill="rgb(225,228,237)"/>
<!-- sidebar icons -->
<g transform="translate(18,185)">
<path d="M12.6 19.8 H7.6 Q7 19.8 7 19.2 V7.3 Q7 6.7 7.6 6.7 H15.4 Q18.5 6.7 18.5 9.8 V13" fill="none" stroke="#23262d" stroke-width="1.5"/>
<path d="M10 10.7 H14.2 M10 13.4 H11.3" stroke="#4f6fe8" stroke-width="1.3"/>
<rect x="15.5" y="16.2" width="4.8" height="5.2" fill="#777a80"/>
<path d="M15.5 17.6 H20.3 M15.5 19.3 H20.3" stroke="#b9bbc0" stroke-width="0.6"/>
</g>
<g transform="translate(18,220)">
<circle cx="12.6" cy="9.7" r="3.7" fill="none" stroke="#1d2026" stroke-width="1.5"/>
<path d="M5.6 20.2 Q6.5 15 10.5 13.3" fill="none" stroke="#1d2026" stroke-width="1.5" stroke-linecap="round"/>
<circle cx="17" cy="18.1" r="2.9" fill="#e3ecff" stroke="#5b7fe3" stroke-width="1.5"/>
</g>
<g transform="translate(18,255)">
<path d="M7.1 19.3 A6.9 6.9 0 1 1 18.9 19.3" fill="none" stroke="#2a2d33" stroke-width="1.6"/>
<path d="M12.8 17.6 L16.5 13.5" stroke="#1d2026" stroke-width="1.9" stroke-linecap="round"/>
<circle cx="9.3" cy="13.8" r="0.95" fill="#7a7ee8"/>
<circle cx="12.8" cy="11.5" r="0.95" fill="#7a7ee8"/>
</g>
<g transform="translate(18,290)">
<path d="M7.6 7.8 H15.3 L18.5 10.6 V20.8 Q18.5 21.6 17.7 21.6 H7.6 Q6.8 21.6 6.8 20.8 V8.6 Q6.8 7.8 7.6 7.8Z" fill="none" stroke="#23262d" stroke-width="1.5"/>
<path d="M9.9 8.6 H14 V10.3 Q14 12.2 12 12.2 Q9.9 12.2 9.9 10.3Z" fill="#4d6ee8"/>
<path d="M10.2 15 H15.6 M10.2 17.8 H14" stroke="#3c3f46" stroke-width="1.3"/>
</g>
<g transform="translate(18,367)">
<path d="M8 8 H20.5 L23 11.8 Q23 13.5 21.5 13.5 H7 Q5.6 13.5 5.6 11.8Z" fill="#2e5df0"/>
<rect x="6.8" y="15.4" width="8.2" height="6.6" rx="0.8" fill="#2e5df0"/>
<rect x="10.3" y="18.6" width="1.6" height="1.6" fill="#fff"/>
<rect x="15.5" y="16" width="4.5" height="7" rx="0.6" fill="#93a9f2"/>
</g>
<!-- search icon -->
<circle cx="409.5" cy="181.3" r="4.3" fill="none" stroke="#3a3d45" stroke-width="1.5"/>
<path d="M412.6 184.5 L416.4 188.4" stroke="#3a3d45" stroke-width="1.5" stroke-linecap="round"/>
<!-- chevrons -->
<path d="M1101 181 L1104.5 184.6 L1108 181" fill="none" stroke="#2a2d33" stroke-width="1.3"/>
<path d="M1553.3 181 L1556.8 184.6 L1560.3 181" fill="none" stroke="#2a2d33" stroke-width="1.3"/>
<!-- tag x -->
<path d="M732 223 L740.8 231.8 M740.8 223 L732 231.8" stroke="#343a46" stroke-width="1.4"/>

</svg>
<!-- header logo -->
<div class="t" style="left:152.5px;top:15.3px;font-size:26px;font-weight:700;letter-spacing:.2px;color:#fff">Enterprise</div>
<div class="t" style="left:25px;top:15.3px;font-size:26px;font-weight:700;letter-spacing:.2px;color:#fff">SH</div><div class="t" style="left:82px;top:15.3px;font-size:26px;font-weight:700;color:#fff">P</div>

<!-- sidebar text -->
<div class="t" style="left:31.5px;top:91.5px;font-size:17px;color:#f08c1a;-webkit-text-stroke:.5px #f08c1a">b</div>
<div class="lab" style="top:157px">Organization</div>
<div class="nav" style="top:190px">Bill management</div>
<div class="nav" style="top:225px">Staff management</div>
<div class="nav" style="top:261px">Data management</div>
<div class="nav" style="top:296px">Activity log</div>
<div class="lab" style="top:340px">Store operation</div>
<div class="nav" style="top:374px;color:#3360e0">Store management</div>

<div class="t" style="left:352px;top:88px;font-size:22px;letter-spacing:.65px;-webkit-text-stroke:.5px #1d2129">Store management</div>
<div class="t" style="left:1334px;top:89.5px;font-size:15px;letter-spacing:.25px;-webkit-text-stroke:.25px currentColor">Duplicate store</div>
<div class="t" style="left:1478px;top:89.5px;font-size:15px;letter-spacing:.15px;color:#fff;-webkit-text-stroke:.25px #fff">Create store(5/10)</div>

<div class="t" style="left:427.5px;top:175.5px;font-size:16px;letter-spacing:.2px;color:#a3a8b3">Search store name/handle/main domain</div>
<div class="t" style="left:1005.8px;top:174.5px;font-size:15px;-webkit-text-stroke:.2px currentColor;color:#1d2129">Store status</div>
<div class="t" style="left:1491px;top:174.5px;font-size:15px;-webkit-text-stroke:.2px currentColor;letter-spacing:.2px;color:#1d2129">Sort by</div>
<div class="t" style="left:397.6px;top:219.5px;font-size:15px;letter-spacing:.05px;-webkit-text-stroke:.15px currentColor;color:#343a46">Store status: Open, Closed, Deactivated, Frozen</div>

<div class="hd" style="left:384.4px">Store name</div>
<div class="hd" style="left:619.8px">handle</div>
<div class="hd" style="left:800px;letter-spacing:.15px">Store's main domain</div>
<div class="hd" style="left:1058px">Store status</div>
<div class="hd" style="left:1224.3px">Store plan</div>
<div class="hd" style="left:1448.7px">Action</div>

<div class="badge" style="top:329.6px"><i></i>Open</div>
<div class="t plan" style="top:322px">Enterprise (Paid)</div>
<div class="goto" style="top:323.8px">Go to admin</div>
<div class="badge" style="top:410.6px"><i></i>Open</div>
<div class="t plan" style="top:403px">Enterprise (Paid)</div>
<div class="goto" style="top:404.8px">Go to admin</div>
<div class="badge" style="top:491.6px"><i></i>Open</div>
<div class="t plan" style="top:484px">Enterprise (Paid)</div>
<div class="goto" style="top:485.8px">Go to admin</div>
<div class="badge" style="top:572.6px"><i></i>Open</div>
<div class="t plan" style="top:565px">Enterprise (Paid)</div>
<div class="goto" style="top:566.8px">Go to admin</div>
<div class="badge" style="top:652.6px"><i></i>Open</div>
<div class="t plan" style="top:645px">Enterprise (Paid)</div>
<div class="goto" style="top:646.8px">Go to admin</div>
<div class="pg" style="left:1473.2px"></div>
<div class="pg" style="left:1517.2px;border-color:#5a83ec;background:#eef4ff;color:#3360e0;"></div>
<div class="pg" style="left:1561.7px"></div>

<svg width="1700" height="820">
<defs><linearGradient id="ag" x1="1175" y1="0" x2="1414" y2="0" gradientUnits="userSpaceOnUse">
<stop offset="0" stop-color="#c8dafd"/><stop offset="0.45" stop-color="#90b0fa"/><stop offset="0.78" stop-color="#5683f8"/><stop offset="1" stop-color="#3466f7"/></linearGradient></defs>
<path d="M1174.7 483.2 H1354.6 V449.7 L1413.7 505.3 L1354.6 559.9 V522.9 H1174.7Z" fill="url(#ag)"/><rect x="1174.7" y="483.2" width="179.9" height="3.6" fill="#fff" opacity=".3"/>
</svg>
<svg width="1700" height="820"><!-- pagination chevrons -->
<path d="M1493.3 729.6 L1487.6 735.3 L1493.3 741" fill="none" stroke="#a4a8b0" stroke-width="1.4"/>
<path d="M1576.7 729.6 L1582.4 735.3 L1576.7 741" fill="none" stroke="#a4a8b0" stroke-width="1.4"/><path d="M1531.4 733.2 L1535.6 730.2 V741" fill="none" stroke="#3360e0" stroke-width="2.1" stroke-linejoin="round"/>
</svg>
<!-- blue box -->
<div class="a" style="left:1428px;top:302px;width:148px;height:403.5px;border:6px solid #3a6bfa"></div>
</body></html>
